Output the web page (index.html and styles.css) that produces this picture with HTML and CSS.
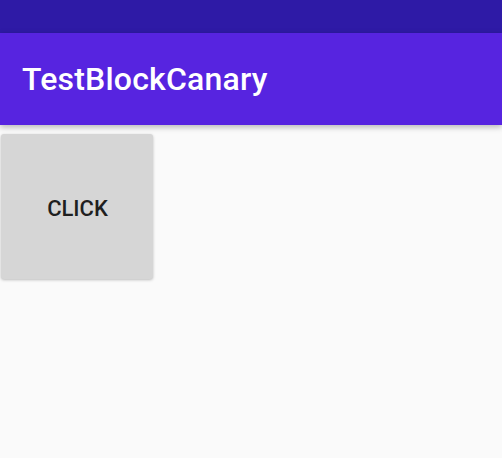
FILE: index.html
```html
<!DOCTYPE html>
<html>
<head>
<meta charset="utf-8">
<link rel="stylesheet" href="styles.css">
</head>
<body>
<div class="status"></div>
<header class="appbar"><span class="title">TestBlockCanary</span></header>
<main class="content">
  <button class="btn">CLICK</button>
</main>
</body>
</html>
```
FILE: styles.css
```css
html, body { margin: 0; padding: 0; }
body {
  width: 502px; height: 458px; overflow: hidden;
  background: #fafafa;
  font-family: Roboto, "Noto Sans", sans-serif;
}
.status { height: 33px; background: #2e1aa6; }
.appbar {
  height: 92px; background: #5724e0;
  display: flex; align-items: center;
  padding-left: 22px;
  box-shadow: 0 2px 6px rgba(0,0,0,0.28);
  position: relative; z-index: 1;
}
.title { color: #fff; font-size: 32px; font-weight: 500; letter-spacing: 0.2px; }
.content { padding: 9px 0 0 1px; }
.btn {
  width: 152px; height: 145px;
  border: none; border-radius: 3px;
  background: #d6d6d6;
  box-shadow: 0 1px 3px rgba(0,0,0,0.25);
  font-family: Roboto, sans-serif; font-size: 22px; font-weight: 500;
  letter-spacing: 0; color: #1f1f1f;
  display: flex; align-items: center; justify-content: center;
  padding: 4px 0 0 1px;
}
```
